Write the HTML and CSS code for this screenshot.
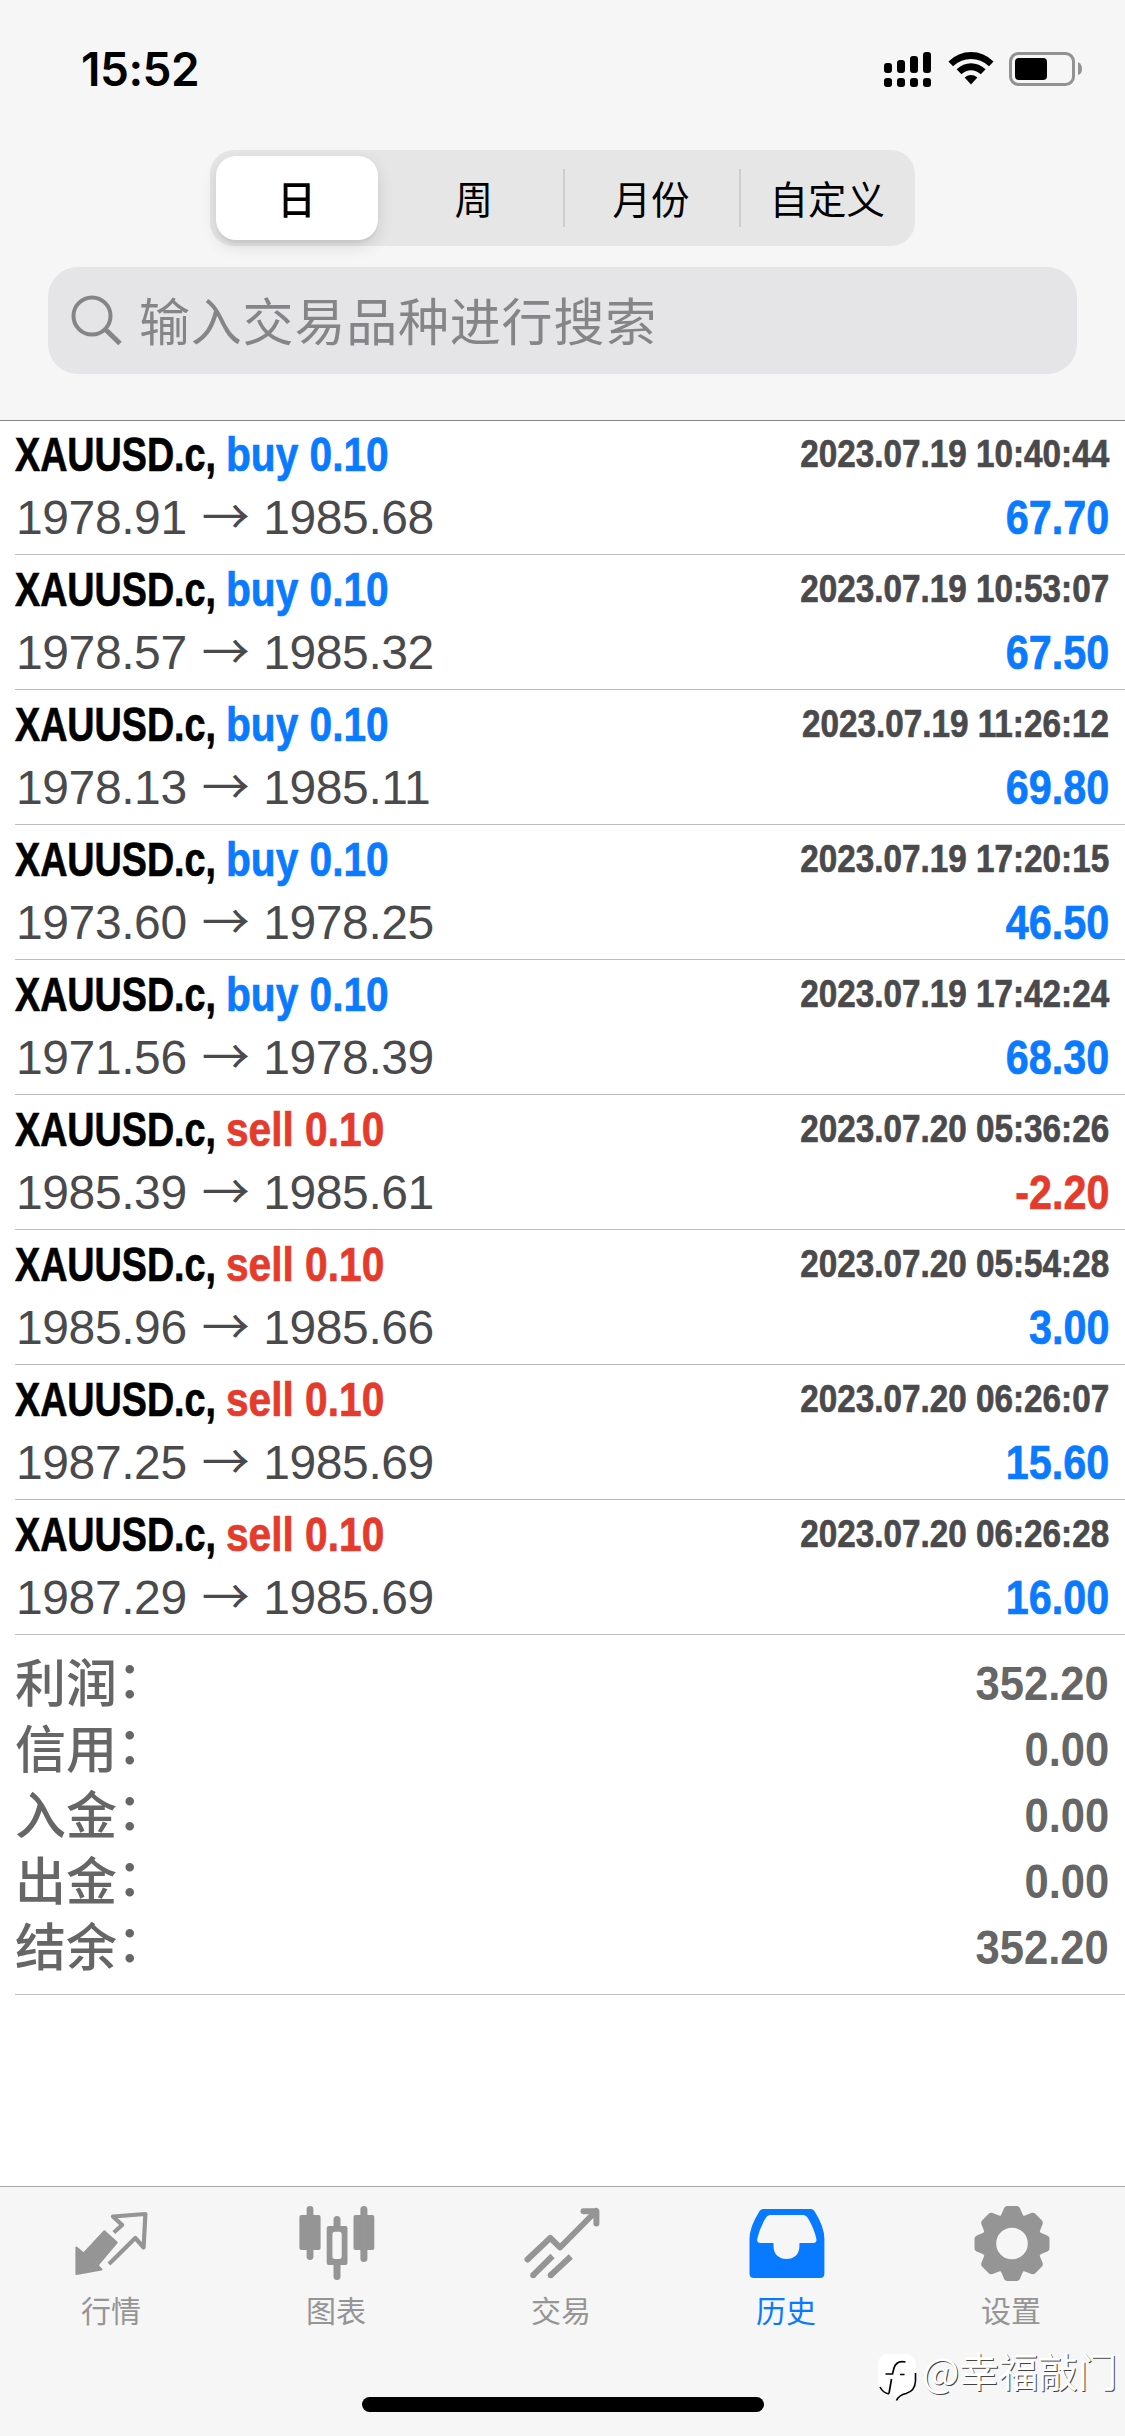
FILE: index.html
```html
<!DOCTYPE html>
<html lang="zh-CN">
<head>
<meta charset="utf-8">
<title>历史</title>
<link rel="stylesheet" href="styles.css">
</head>
<body>
<div class="screen">
  <header class="header">
    <div class="status">
      <span class="clock">15:52</span>
      <svg class="status-icons" width="200" height="40" viewBox="0 0 200 40">
        <g>
          <rect x="0" y="14" width="8" height="10" rx="3"/><rect x="13" y="11" width="8" height="13" rx="3"/><rect x="26" y="7" width="8" height="17" rx="3"/><rect x="39" y="3" width="8" height="21" rx="3"/>
          <rect x="0" y="29" width="8" height="9" rx="3"/><rect x="13" y="29" width="8" height="9" rx="3"/><rect x="26" y="29" width="8" height="9" rx="3"/><rect x="39" y="29" width="8" height="9" rx="3"/>
        </g>
        <path d="M64.5 12.5Q74 3 87 3T109.500 12.500L105 17.200Q97 10 87 10T69 17.200Z"/>
        <path d="M72.600 20.300Q79 14.200 87 14.200T101.600 20.300L96.800 25.300Q92 21.200 87 21.200T77.400 25.300Z"/>
        <path d="M80.600 28.400Q87 23.600 93.400 28.400L87 35.500Z"/>
        <rect x="126.500" y="4.500" width="63" height="31" rx="8" fill="none" stroke="#929292" stroke-width="3"/>
        <rect x="131" y="9" width="32" height="22" rx="4"/>
        <path d="M194 13Q198 15 198 20T194 26Z" fill="#929292"/>
      </svg>
    </div>
    <nav class="segments">
      <span class="segment segment-on">日</span>
      <span class="segment">周</span>
      <span class="segment segment-cut">月份</span>
      <span class="segment segment-cut">自定义</span>
    </nav>
    <div class="search">
      <svg width="52" height="52" viewBox="0 0 52 52" fill="none" stroke="#858588" stroke-width="4"><circle cx="21" cy="21" r="18.500"/><path d="M34.500 34.500L49 48.500" stroke-width="5"/></svg>
      <span class="placeholder">输入交易品种进行搜索</span>
    </div>
  </header>

  <main class="history">
    <ul class="deals">
      <li class="deal"><div class="line"><span class="symbol"><b>XAUUSD.c,</b></span><b class="side buy">buy 0.10</b><b class="time">2023.07.19 10:40:44</b></div><div class="line"><span class="price">1978.91 <i>→</i> 1985.68</span><b class="amount buy">67.70</b></div></li>
      <li class="deal"><div class="line"><span class="symbol"><b>XAUUSD.c,</b></span><b class="side buy">buy 0.10</b><b class="time">2023.07.19 10:53:07</b></div><div class="line"><span class="price">1978.57 <i>→</i> 1985.32</span><b class="amount buy">67.50</b></div></li>
      <li class="deal"><div class="line"><span class="symbol"><b>XAUUSD.c,</b></span><b class="side buy">buy 0.10</b><b class="time">2023.07.19 11:26:12</b></div><div class="line"><span class="price">1978.13 <i>→</i> 1985.11</span><b class="amount buy">69.80</b></div></li>
      <li class="deal"><div class="line"><span class="symbol"><b>XAUUSD.c,</b></span><b class="side buy">buy 0.10</b><b class="time">2023.07.19 17:20:15</b></div><div class="line"><span class="price">1973.60 <i>→</i> 1978.25</span><b class="amount buy">46.50</b></div></li>
      <li class="deal"><div class="line"><span class="symbol"><b>XAUUSD.c,</b></span><b class="side buy">buy 0.10</b><b class="time">2023.07.19 17:42:24</b></div><div class="line"><span class="price">1971.56 <i>→</i> 1978.39</span><b class="amount buy">68.30</b></div></li>
      <li class="deal"><div class="line"><span class="symbol"><b>XAUUSD.c,</b></span><b class="side sell">sell 0.10</b><b class="time">2023.07.20 05:36:26</b></div><div class="line"><span class="price">1985.39 <i>→</i> 1985.61</span><b class="amount sell">-2.20</b></div></li>
      <li class="deal"><div class="line"><span class="symbol"><b>XAUUSD.c,</b></span><b class="side sell">sell 0.10</b><b class="time">2023.07.20 05:54:28</b></div><div class="line"><span class="price">1985.96 <i>→</i> 1985.66</span><b class="amount buy">3.00</b></div></li>
      <li class="deal"><div class="line"><span class="symbol"><b>XAUUSD.c,</b></span><b class="side sell">sell 0.10</b><b class="time">2023.07.20 06:26:07</b></div><div class="line"><span class="price">1987.25 <i>→</i> 1985.69</span><b class="amount buy">15.60</b></div></li>
      <li class="deal"><div class="line"><span class="symbol"><b>XAUUSD.c,</b></span><b class="side sell">sell 0.10</b><b class="time">2023.07.20 06:26:28</b></div><div class="line"><span class="price">1987.29 <i>→</i> 1985.69</span><b class="amount buy">16.00</b></div></li>
    </ul>
    <dl class="summary">
      <div class="total"><dt>利润<span class="colon">：</span></dt><dd>352.20</dd></div>
      <div class="total"><dt>信用<span class="colon">：</span></dt><dd>0.00</dd></div>
      <div class="total"><dt>入金<span class="colon">：</span></dt><dd>0.00</dd></div>
      <div class="total"><dt>出金<span class="colon">：</span></dt><dd>0.00</dd></div>
      <div class="total"><dt>结余<span class="colon">：</span></dt><dd>352.20</dd></div>
    </dl>
  </main>

  <footer class="footer">
    <nav class="tabs">
      <a class="tab">
        <svg class="tab-icon" viewBox="0 0 90 90"><path fill="currentColor" stroke="currentColor" stroke-width="2" stroke-linejoin="round" d="M8.400 47.500L15.700 53.500L36.400 31.300L48.700 42.500L29.500 65.300L33.500 69.500L8.400 74Z"/><path fill="none" stroke="currentColor" stroke-width="4.200" stroke-linejoin="round" d="M45.800 32.500L54.200 25L44.900 16.500L77.400 14L75.600 47.500L67.300 38L41 64"/></svg>
        <span>行情</span>
      </a>
      <a class="tab">
        <svg class="tab-icon" viewBox="0 0 90 90" fill="currentColor"><rect x="6.400" y="15" width="21.200" height="35" rx="2"/><rect x="13.600" y="6" width="6.800" height="54" rx="3.400"/><rect x="60.500" y="15" width="20.800" height="35" rx="2"/><rect x="67.400" y="6" width="7" height="56" rx="3.500"/><rect x="40.500" y="16" width="7" height="14" rx="3.500"/><rect x="40.500" y="60" width="7" height="20" rx="3.500"/><path fill-rule="evenodd" d="M35.700 26H52.500Q54.500 26 54.500 28V63Q54.500 65 52.500 65H35.700Q33.700 65 33.700 63V28Q33.700 26 35.700 26ZM42 31.700Q39.400 31.700 39.400 34.500V56.300Q39.400 59 42 59H46Q48.700 59 48.700 56.300V34.500Q48.700 31.700 46 31.700Z"/></svg>
        <span>图表</span>
      </a>
      <a class="tab">
        <svg class="tab-icon" viewBox="0 0 90 90" fill="none" stroke="currentColor" stroke-width="6" stroke-linejoin="round"><path stroke-linecap="round" d="M9.500 59.500L32.300 37.800L42 47.500L78.200 11M65.500 11.200H78.400V23.500"/><path d="M15.200 75.200L34.500 56M32.700 75.200L52.800 56.500"/><g fill="currentColor" stroke="none"><circle cx="15.200" cy="75.200" r="3"/><circle cx="32.700" cy="75.200" r="3"/></g></svg>
        <span>交易</span>
      </a>
      <a class="tab tab-on">
        <svg class="tab-icon" viewBox="0 0 90 90" fill="currentColor"><path fill-rule="evenodd" d="M20.500 9H67.500Q70.500 9 72 12Q81.400 27 81.400 39V73.500Q81.400 78 77 78H11Q6.500 78 6.500 73.500V39Q6.500 27 16 12Q17.500 9 20.500 9ZM27 15Q24.500 15 23 17.500Q16.500 28 14.200 39Q13.600 43 17.500 43H30.500V46Q30.500 52 34 55.500Q38 59 43.500 59T53 55.500Q56.400 52 56.400 46V43H70Q74 43 73.400 39Q71 28 64.500 17.500Q63 15 60.500 15Z"/></svg>
        <span>历史</span>
      </a>
      <a class="tab">
        <svg class="tab-icon" viewBox="0 0 90 90" fill="currentColor"><defs><path id="tooth" d="M30 20Q34 14 35.500 9.500Q36.500 6 39.500 6H48.500Q51.500 6 52.500 9.500Q54 14 58 20Z"/></defs><path fill-rule="evenodd" d="M44 14.500A29 29 0 1 1 44 72.500A29 29 0 1 1 44 14.500ZM44 27.700A15.800 15.800 0 1 0 44 59.300A15.800 15.800 0 1 0 44 27.700Z"/><use href="#tooth"/><use href="#tooth" transform="rotate(45 44 43.500)"/><use href="#tooth" transform="rotate(90 44 43.500)"/><use href="#tooth" transform="rotate(135 44 43.500)"/><use href="#tooth" transform="rotate(180 44 43.500)"/><use href="#tooth" transform="rotate(225 44 43.500)"/><use href="#tooth" transform="rotate(270 44 43.500)"/><use href="#tooth" transform="rotate(315 44 43.500)"/></svg>
        <span>设置</span>
      </a>
    </nav>
    <div class="home-bar"></div>
  </footer>

  <div class="watermark">
    <svg width="42" height="50" viewBox="0 0 42 50"><path fill="#fff" d="M12 1H28Q39 1 39 13V28Q39 39 28 41Q22 42 20 47Q18 42 13 41Q1 39 1 28V13Q1 1 12 1Z"/><path d="M28.500 9Q19.500 7 17 15L15.500 21H8.500M14.500 26L12 40.500M23 21.500H27.500" fill="none" stroke="#000" stroke-width="1.700"/><path d="M3 34Q6 40 12 41M38.500 20V28Q38 38 29 40.500Q22 42 19.500 47.500" fill="none" stroke="#000" stroke-width="1.600"/></svg>
    <span>@幸福敲门</span>
  </div>
</div>
</body>
</html>
```
FILE: styles.css
```css
* { box-sizing: border-box; margin: 0; padding: 0; }

body {
  width: 1125px;
  background: #fff;
  font-family: "Liberation Sans", "Noto Sans CJK SC", sans-serif;
}

.screen {
  position: relative;
  display: flex;
  flex-direction: column;
  width: 1125px;
  height: 2436px;
  overflow: hidden;
}

.header {
  display: flex;
  flex-direction: column;
  height: 421px;
  background: #f6f6f6;
  border-bottom: 1px solid #868688;
}

.status {
  display: flex;
  justify-content: space-between;
  height: 150px;
  padding: 41px 41px 0 81px;
}

.clock {
  font: 600 46px/56px Inter, sans-serif;
  letter-spacing: -0.5px;
}

.status-icons { margin-top: 8px; }

.segments {
  display: grid;
  grid-template-columns: repeat(4, 1fr);
  grid-template-rows: 96px;
  align-self: center;
  width: 705px;
  height: 96px;
  background: #e6e6e6;
  border-radius: 24px;
}

.segment {
  display: flex;
  align-items: center;
  justify-content: center;
  font: 400 38.5px/50px "Noto Sans CJK SC", sans-serif;
  margin: 19px 0;
  padding: 0 1px 3px 0;
}

.segment-on {
  margin: 6px 8px 6px 6px;
  background: #fff;
  border-radius: 20px;
  font-weight: 500;
  box-shadow: 0 6px 16px rgba(0, 0, 0, .12), 0 3px 2px rgba(0, 0, 0, .04);
}

.segment-cut { border-left: 2px solid #cecece; }

.search {
  display: flex;
  align-items: center;
  gap: 16px;
  height: 107px;
  margin: 21px 48px 0;
  padding-left: 23px;
  background: #e5e5e7;
  border-radius: 30px;
}

.placeholder {
  padding-bottom: 4px;
  font: 400 51px/72px "Noto Sans CJK SC", sans-serif;
  letter-spacing: .8px;
  color: #858588;
}

.deals { margin-top: -1px; list-style: none; }

.deal {
  height: 135px;
  margin-left: 15px;
  padding: 3px 16px 0 0;
  border-bottom: 1px solid #bcbcbf;
}

.line {
  display: flex;
  align-items: baseline;
  height: 63px;
  font-size: 48px;
  line-height: 63px;
  white-space: nowrap;
}

.line b { -webkit-text-stroke: .7px currentColor; }
.symbol { width: 211px; }
.symbol b { display: inline-block; transform: scaleX(.785); transform-origin: left; }
.side { transform: scaleX(.847); transform-origin: left; }

.time {
  align-self: flex-start;
  margin-left: auto;
  font-size: 39px;
  line-height: 62px;
  color: #4a4a4c;
  transform: scaleX(.853);
  transform-origin: right;
}

.price { padding-left: 1px; color: #4a4a4c; letter-spacing: -.4px; }
.price i { margin: 0 1px 0 2px; font: 400 48px/1 "Noto Sans CJK SC", sans-serif; }
.amount { margin-left: auto; transform: scaleX(.86); transform-origin: right; }
.buy { color: #0a7aff; }
.sell { color: #e53b2c; }

.summary {
  height: 360px;
  margin-left: 15px;
  padding: 15px 16px 0 0;
  border-bottom: 1px solid #c0c0c2;
  color: #666;
}

.total { display: flex; justify-content: space-between; height: 66px; line-height: 66px; }
.total dt { font: 500 51px/69px "Liberation Sans", "Noto Sans CJK SC", sans-serif; }
.total dd { font-size: 49px; font-weight: 700; transform: scaleX(.89); transform-origin: right; }
.colon { position: relative; top: -4px; }

.footer {
  height: 250px;
  margin-top: auto;
  background: #f6f6f6;
  border-top: 1px solid #a8a8a8;
}

.tabs { display: grid; grid-template-columns: repeat(5, 1fr); height: 210px; padding-top: 13px; }

.tab {
  display: flex;
  flex-direction: column;
  align-items: center;
  color: #959595;
  font: 400 30px/38px "Noto Sans CJK SC", sans-serif;
}

.tab span { margin-right: 3px; }
.tab-on { color: #087aff; }
.tab-icon { width: 90px; height: 90px; }

.home-bar { width: 402px; height: 15px; margin: 0 auto; background: #000; border-radius: 8px; }

.watermark {
  position: absolute;
  left: 877px;
  top: 2353px;
  display: flex;
  gap: 3px;
  font: 400 39.5px/34px "Noto Sans CJK SC", sans-serif;
  color: #fff;
  text-shadow: 1px 1px 0 #444;
  white-space: nowrap;
}
```
